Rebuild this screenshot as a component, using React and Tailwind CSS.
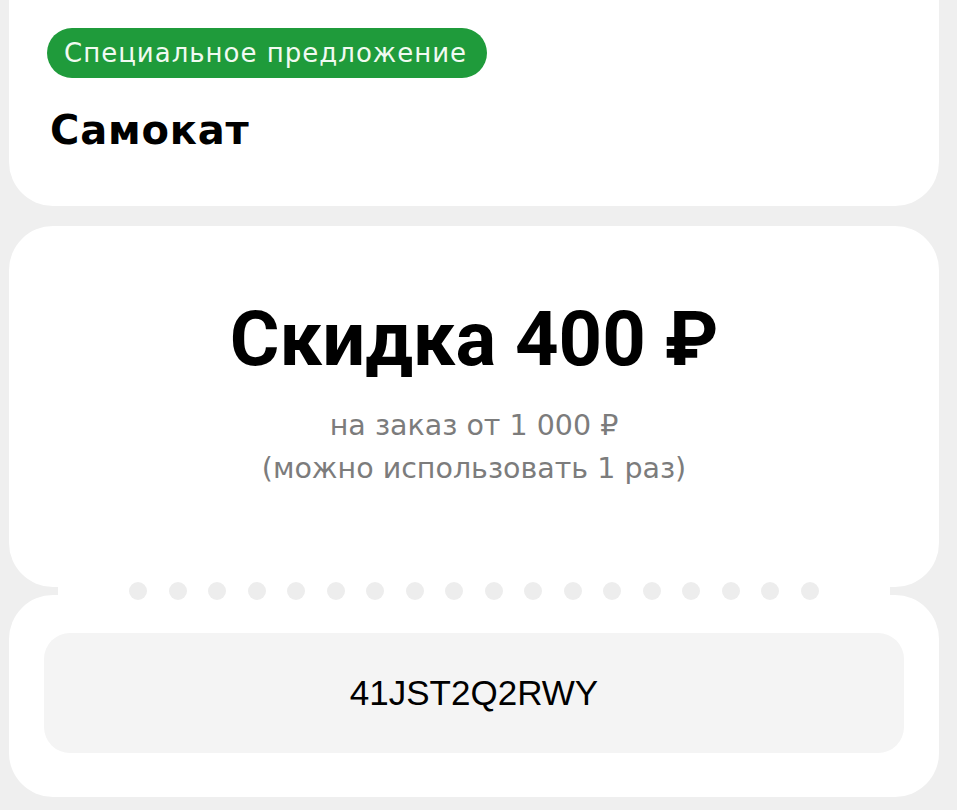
import React from 'react';

const dots = Array.from({ length: 18 });

const App = () => {
  return (
    <div className="h-[810px] w-[957px] overflow-hidden bg-[#efefef] px-[9px] pr-[18px] font-['DejaVu_Sans',sans-serif]">
      {/* header card */}
      <div className="h-[206px] rounded-b-[44px] bg-white pl-[38px] pt-[28px]">
        <div className="inline-flex h-[50px] w-[440px] items-center rounded-full bg-[#1f9b3b] pl-[17px] text-[26px] tracking-[1px] text-[#f1faf1]">
          Специальное предложение
        </div>
        <div className="mt-[29px] pl-[3px] text-[40px] font-bold leading-[46px] tracking-[0.8px] text-black">Самокат</div>
      </div>

      {/* ticket */}
      <div className="mt-[20px] flex flex-col">
        <div className="flex h-[361px] flex-col items-center rounded-[44px] bg-white pt-[68px]">
          <div className="font-['Roboto',sans-serif] text-[76px] font-bold leading-[90px] text-black">Скидка 400 ₽</div>
          <div className="mt-[20px] text-center text-[28.5px] leading-[43px] text-[#7c7c7c]">
            <div>на заказ от 1 000 ₽</div>
            <div>(можно использовать 1 раз)</div>
          </div>
        </div>
        <div className="relative z-10 mx-[49px] flex h-[8px] items-center justify-center gap-[21.5px] bg-white">
          {dots.map((_, i) => (
            <span key={i} className="h-[18px] w-[18px] shrink-0 rounded-full bg-[#ededed]" />
          ))}
        </div>
        <div className="h-[202px] rounded-[44px] bg-white px-[35px] pt-[38px]">
          <div className="flex h-[120px] items-center justify-center rounded-[26px] bg-[#f4f4f4] font-['Liberation_Sans',sans-serif] text-[35px] text-black">
            41JST2Q2RWY
          </div>
        </div>
      </div>
    </div>
  );
};

export default App;
